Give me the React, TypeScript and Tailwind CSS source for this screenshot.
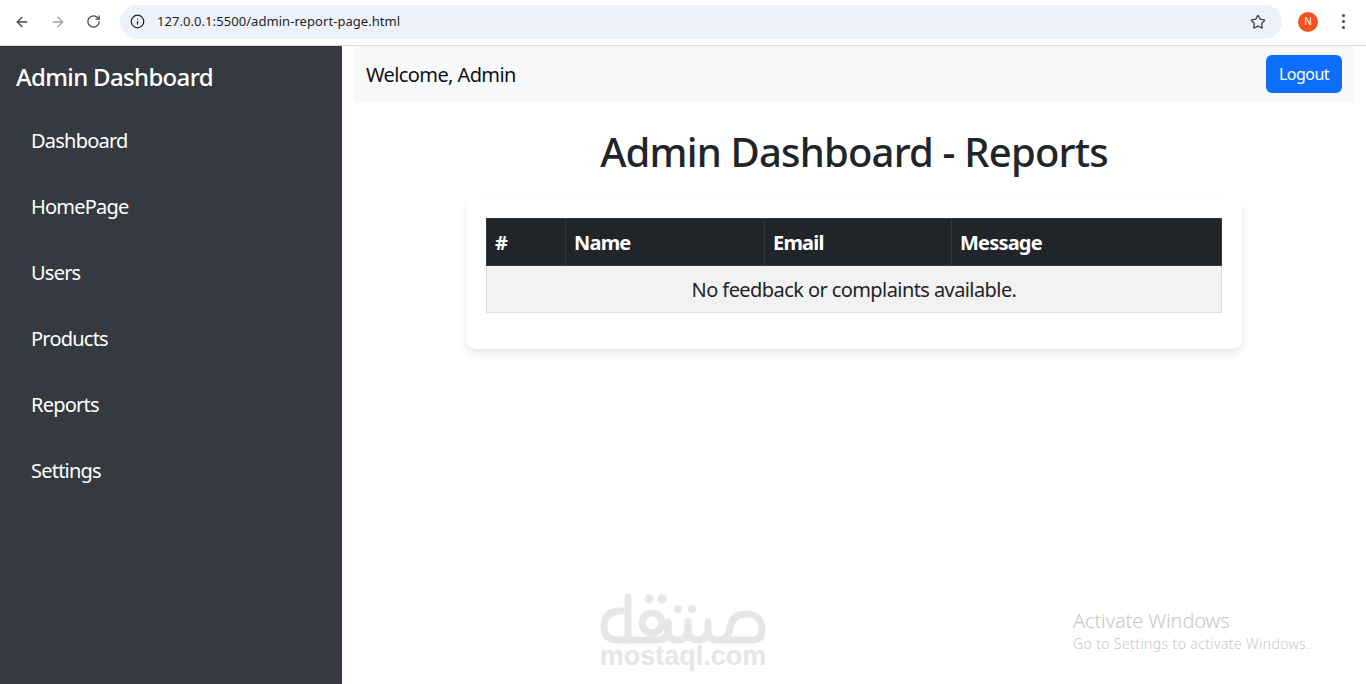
import { ArrowLeft, ArrowRight, RotateCw, Info, Star } from "lucide-react";

const font = { fontFamily: '"Noto Sans", "Open Sans", sans-serif' };
const links = ["Dashboard", "HomePage", "Users", "Products", "Reports", "Settings"];

function Logo() {
  return (
    <svg width="166" height="50" viewBox="0 0 166 50" fill="none" stroke="#e6e6e6" strokeWidth="7" strokeLinecap="round" strokeLinejoin="round">
      <path d="M22 17Q4 17 4 32Q4 46 18 46H58Q68 46 68 34V28" />
      <path d="M28 3V46" />
      <circle cx="52" cy="29" r="10" />
      <path d="M68 36Q68 46 78 46Q88 46 88 34V28" />
      <path d="M88 36Q88 46 98 46Q108 46 108 34V28" />
      <path d="M108 36Q108 46 118 46H152Q162 46 162 36Q162 20 146 20Q132 20 130 34Q128 46 118 46" />
      <circle cx="49" cy="5" r="4.5" fill="#e6e6e6" stroke="none" />
      <circle cx="62" cy="5" r="4.5" fill="#e6e6e6" stroke="none" />
      <circle cx="78" cy="15" r="4" fill="#e6e6e6" stroke="none" />
      <circle cx="92" cy="15" r="4" fill="#e6e6e6" stroke="none" />
    </svg>
  );
}

export default function App() {
  return (
    <div style={font} className="relative flex flex-col h-[684px] w-[1366px] overflow-hidden bg-white">
      <header className="flex items-center h-[46px] pb-[2px] shrink-0 border-b border-[#dadce0] bg-white">
        <div className="flex items-center w-[120px] pl-[14px] gap-[20px]">
          <ArrowLeft size={16} strokeWidth={2} className="text-[#474747]" />
          <ArrowRight size={16} strokeWidth={2} className="text-[#a3a3a3]" />
          <RotateCw size={15} strokeWidth={2} className="text-[#474747]" />
        </div>
        <div className="flex items-center justify-between w-[1162px] h-[34px] rounded-full bg-[#edf2fa] pl-[10px] pr-[16px]">
          <div className="flex items-center gap-[12px]">
            <Info size={15} strokeWidth={2} className="text-[#1f1f1f]" />
            <span className="pt-[1px] text-[13px] tracking-[0.06px] text-[#1f1f1f]">127.0.0.1:5500/admin-report-page.html</span>
          </div>
          <Star size={16} strokeWidth={2} className="text-[#474747]" />
        </div>
        <div className="flex items-center ml-[16px] gap-[24px]">
          <div className="flex items-center justify-center w-[20px] h-[20px] rounded-full bg-[#f4511e] text-[10px] text-white">N</div>
          <div className="flex flex-col gap-[3px]">
            <span className="w-[3px] h-[3px] rounded-full bg-[#474747]" />
            <span className="w-[3px] h-[3px] rounded-full bg-[#474747]" />
            <span className="w-[3px] h-[3px] rounded-full bg-[#474747]" />
          </div>
        </div>
      </header>

      <div className="flex flex-1 min-h-0">
        <aside className="w-[342px] shrink-0 bg-[#343a40] text-white">
          <h2 className="pl-[16px] pt-[13px] pb-[16px] text-[24px] leading-[36px] font-medium tracking-[-0.67px]">Admin Dashboard</h2>
          <nav className="flex flex-col">
            {links.map((l) => (
              <a key={l} className="block h-[66px] pl-[31px] pt-[15px] text-[20px] leading-[30px] tracking-[-0.78px]">{l}</a>
            ))}
          </nav>
        </aside>

        <main className="flex-1 px-[12px]">
          <div className="flex items-center justify-between h-[56px] bg-[#f8f9fa] px-[12px]">
            <span className="pt-[2px] text-[20px] tracking-[-0.6px] text-[#111]">Welcome, Admin</span>
            <button className="h-[38px] w-[76px] rounded-[6px] bg-[#0d6efd] text-[16px] tracking-[-0.5px] text-white">Logout</button>
          </div>
          <h1 className="mt-[26px] text-center text-[40px] leading-[48px] font-medium tracking-[-0.8px] text-[#212529]">Admin Dashboard - Reports</h1>
          <div className="mx-auto mt-[22px] w-[776px] h-[151px] rounded-[10px] bg-white p-[20px] shadow-[0_4px_8px_rgba(0,0,0,0.1)]">
            <table className="w-[736px] border-collapse table-fixed text-[20px]">
              <thead>
                <tr className="h-[47px] bg-[#212529] text-white text-left font-bold tracking-[-0.8px]">
                  <th className="w-[79px] pl-[8px] pt-[2px] border border-[#32383e]">#</th>
                  <th className="w-[199px] pl-[8px] pt-[2px] border border-[#32383e]">Name</th>
                  <th className="w-[187px] pl-[8px] pt-[2px] border border-[#32383e]">Email</th>
                  <th className="pl-[8px] pt-[2px] border border-[#32383e]">Message</th>
                </tr>
              </thead>
              <tbody>
                <tr className="h-[47px] bg-[#f2f2f2]">
                  <td colSpan={4} className="pt-[2px] text-center tracking-[-0.58px] text-[#212529] border border-[#dee2e6]">No feedback or complaints available.</td>
                </tr>
              </tbody>
            </table>
          </div>
        </main>
      </div>

      <div className="absolute left-[600px] top-[594px] flex flex-col items-center w-[166px]">
        <Logo />
        <span className="-mt-[1px] text-[27px] leading-[26px] font-bold text-[#e6e6e6]" style={{ fontFamily: '"Liberation Sans", sans-serif' }}>mostaql.com</span>
      </div>
      <div className="absolute left-[1073px] top-[607px] text-[#c8c8c8]">
        <div className="text-[20px] leading-[27px] tracking-[-0.12px] font-light">Activate Windows</div>
        <div className="text-[14px] leading-[19px] tracking-[0.38px] font-light">Go to Settings to activate Windows.</div>
      </div>
    </div>
  );
}
